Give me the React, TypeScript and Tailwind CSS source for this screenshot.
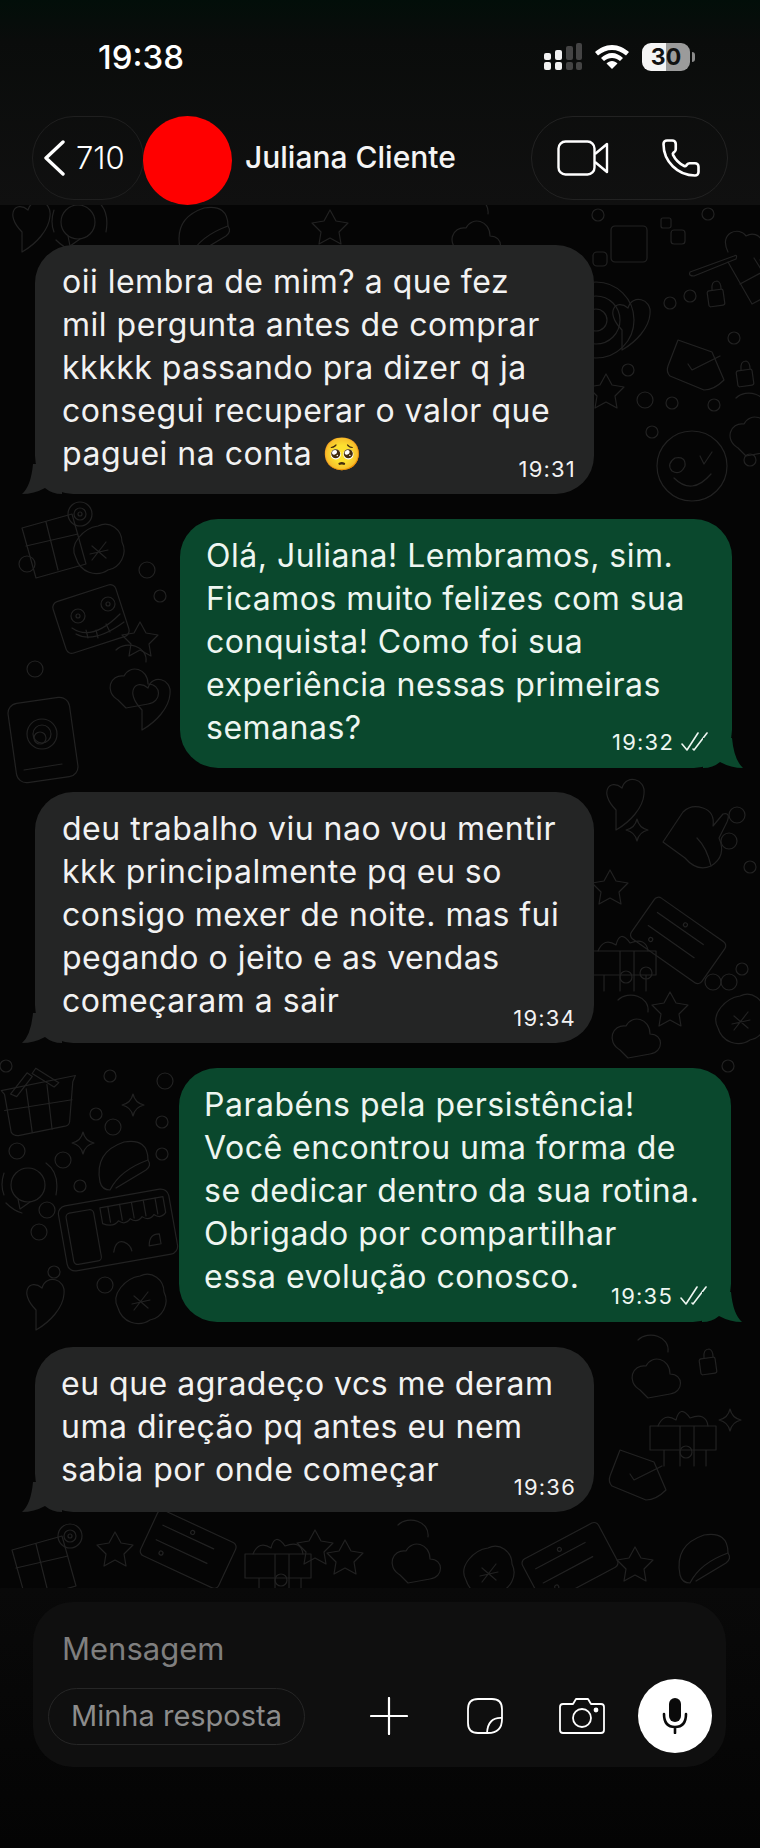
import { Phone } from "lucide-react";

const sans = "font-['Inter','Noto_Sans',sans-serif]";

const messages = [
  {
    out: false,
    time: "19:31",
    box: "ml-[35px] w-[559px] pt-[15px] pb-[19px] pl-[27px]",
    lines: ["oii lembra de mim? a que fez", "mil pergunta antes de comprar", "kkkkk passando pra dizer q ja", "consegui recuperar o valor que", "paguei na conta 🥺"],
  },
  {
    out: true,
    time: "19:32",
    box: "ml-[180px] w-[552px] pt-[15px] pb-[19px] pl-[26px]",
    lines: ["Olá, Juliana! Lembramos, sim.", "Ficamos muito felizes com sua", "conquista! Como foi sua", "experiência nessas primeiras", "semanas?"],
  },
  {
    out: false,
    time: "19:34",
    box: "mt-[-1px] ml-[35px] w-[559px] pt-[15px] pb-[21px] pl-[27px]",
    lines: ["deu trabalho viu nao vou mentir", "kkk principalmente pq eu so", "consigo mexer de noite. mas fui", "pegando o jeito e as vendas", "começaram a sair"],
  },
  {
    out: true,
    time: "19:35",
    box: "ml-[179px] w-[552px] pt-[15px] pb-[24px] pl-[25px]",
    lines: ["Parabéns pela persistência!", "Você encontrou uma forma de", "se dedicar dentro da sua rotina.", "Obrigado por compartilhar", "essa evolução conosco."],
  },
  {
    out: false,
    time: "19:36",
    box: "ml-[35px] w-[559px] pt-[15px] pb-[21px] pl-[26px]",
    lines: ["eu que agradeço vcs me deram", "uma direção pq antes eu nem", "sabia por onde começar"],
  },
];

// doodle wallpaper, drawn in page coordinates
function Wallpaper() {
  const dots = [
    [6, 1066], [110, 1076], [165, 1081], [96, 1114], [162, 1122], [113, 1127], [17, 1151], [63, 1160], [162, 1154], [80, 1186], [47, 1210], [39, 1232], [54, 1272], [105, 1285],
    [598, 215], [708, 214], [670, 303], [690, 296], [734, 338], [628, 370], [672, 403], [645, 400], [714, 405], [652, 432], [750, 460],
    [737, 815], [729, 841], [750, 867], [729, 982], [742, 969], [646, 973], [713, 982], [728, 1066],
    [27, 564], [147, 570], [160, 596], [35, 669], [40, 738],
  ];
  return (
    <svg
      aria-hidden="true"
      viewBox="0 205 760 1383"
      className="absolute inset-0 h-full w-full"
      fill="none"
      stroke="#222222"
      strokeWidth="1.2"
      strokeLinecap="round"
      strokeLinejoin="round"
    >
      <defs>
        <g id="basket">
          <path d="M0 20 L75 10 L72 16 L66 56 Q65 60 60 60 L14 66 Q9 66 7 62 L3 24 Z" />
          <path d="M2 40 L70 34 M25 20 L28 64 M46 17 L48 62" />
          <path d="M9 24 L27 4 L32 8 L15 27 Z M36 0 L58 16 L53 20 L32 5 Z" />
        </g>
        <path id="spark" d="M0 -11 Q2 -2 11 0 Q2 2 0 11 Q-2 2 -11 0 Q-2 -2 0 -11 Z" />
        <path id="star5" d="M0 -18 L6 -7 L18 -5 L9 4 L11 16 L0 10 L-11 16 L-9 4 L-18 -5 L-6 -7 Z" />
        <g id="taco">
          <path d="M0 40 Q-6 10 24 0 Q48 -4 48 18 Q20 28 10 48 Q2 48 0 40 Z" />
          <path d="M48 18 Q52 24 46 28 L16 46" />
        </g>
        <g id="shop">
          <rect x="0" y="0" width="112" height="66" rx="8" />
          <rect x="7" y="8" width="28" height="52" rx="4" />
          <path d="M42 8 H106 V24 Q100 30 94 24 Q88 30 82 24 Q76 30 70 24 Q64 30 58 24 Q52 30 42 24 Z" />
          <path d="M50 8 V24 M62 8 V24 M74 8 V24 M86 8 V24 M98 8 V24" />
          <path d="M48 54 Q52 42 60 46 Q66 50 66 56 M84 54 Q86 42 96 44 V54 Z" />
        </g>
        <g id="waves">
          <circle cx="0" cy="0" r="17" />
          <path d="M-10 14 L-8 24 L2 17" />
          <path d="M-24 10 Q-28 0 -24 -12 M18 -22 Q32 -12 28 10 M-22 18 Q-14 26 -6 28" />
        </g>
        <path id="heart" d="M0 10 C-18 -8 -6 -22 6 -12 C10 -26 30 -22 28 -6 C27 8 14 22 0 30 Z" />
        <g id="smiley">
          <circle cx="0" cy="0" r="35" />
          <path d="M-18 12 Q0 30 19 8" />
          <path d="M-17 -8 Q-26 -2 -20 5 Q-12 10 -7 0 Q-6 -10 -17 -8 M8 -10 L12 -2 L20 -14" />
        </g>
        <g id="lock">
          <rect x="0" y="8" width="16" height="16" rx="2" transform="rotate(-8 8 16)" />
          <path d="M4 8 Q3 -1 9 -1 Q13 0 13 7" />
        </g>
        <g id="cart">
          <path d="M0 10 L44 -6 Q48 -8 46 -3 L4 14 Q-2 14 0 10 Z" />
          <path d="M38 0 L62 42 L96 24 M50 22 L76 8 M64 -4 L84 28" />
          <path d="M38 -10 C28 -30 50 -36 56 -26 C70 -34 80 -14 70 -2" />
        </g>
        <g id="card">
          <path d="M10 0 L44 12 L56 40 Q46 50 36 50 L2 36 Q-2 32 0 26 Z" />
          <path d="M20 24 L24 30 L52 16" />
        </g>
        <g id="camera">
          <rect x="0" y="0" width="62" height="80" rx="10" transform="rotate(-8 31 40)" />
          <circle cx="30" cy="34" r="15" />
          <circle cx="30" cy="34" r="9" />
          <path d="M12 70 L50 64" />
        </g>
        <g id="grin">
          <rect x="0" y="0" width="66" height="54" rx="6" transform="rotate(-18 33 27)" />
          <circle cx="20" cy="24" r="7" />
          <circle cx="20" cy="24" r="2" />
          <circle cx="50" cy="12" r="7" />
          <circle cx="50" cy="12" r="2" />
          <path d="M14 36 Q34 50 62 22" />
          <path d="M18 42 Q36 52 66 30" />
          <path d="M28 38 L30 46 M38 38 L40 46 M48 32 L52 40" />
        </g>
        <g id="flower">
          <path d="M0 -24 C12 -30 24 -20 24 -8 C30 4 22 18 10 20 C-2 28 -18 22 -22 8 C-30 -6 -14 -22 0 -24 Z" />
          <path d="M-6 -4 L8 8 M8 -8 L-6 10 M-8 4 L10 0" />
        </g>
        <g id="mitten">
          <path d="M0 34 L20 4 Q28 -4 40 0 Q52 4 50 18 L60 6 Q68 4 64 14 L56 30 Q64 48 48 58 Q34 64 22 50 Z" />
          <path d="M34 30 Q44 40 48 58" />
        </g>
        <g id="tape">
          <rect x="0" y="0" width="86" height="50" rx="5" />
          <path d="M10 14 H66 M10 30 H66" />
          <circle cx="40" cy="8" r="2" />
          <circle cx="20" cy="40" r="2" />
        </g>
        <g id="gift">
          <path d="M0 16 H66 V40 M0 16 V40 M0 40 H66 M14 40 V56 M56 40 V56 M30 16 V56 M44 16 V56" />
          <path d="M8 16 Q14 2 26 10 Q30 -6 40 8 Q56 2 58 16" />
          <circle cx="36" cy="42" r="6" />
        </g>
        <g id="roll">
          <path d="M0 20 L50 6 L64 56 L14 70 Z M24 14 L36 62 M4 38 L56 26" />
          <circle cx="58" cy="6" r="12" />
          <circle cx="58" cy="6" r="6" />
          <circle cx="58" cy="6" r="2" />
        </g>
        <g id="squares">
          <rect x="0" y="0" width="36" height="36" rx="4" />
          <rect x="-18" y="26" width="14" height="14" rx="4" />
          <rect x="50" y="-8" width="10" height="10" rx="2" />
          <rect x="60" y="4" width="14" height="14" rx="3" />
        </g>
        <g id="cloud">
          <path d="M0 20 C-14 12 -8 -6 6 -4 C12 -16 30 -12 30 4 C44 4 44 22 30 24 L8 28 Z" />
          <path d="M-2 -30 C8 -40 30 -34 28 -18" />
        </g>
        <g id="spiral">
          <circle cx="0" cy="0" r="38" />
          <circle cx="0" cy="0" r="24" />
          <circle cx="0" cy="0" r="11" />
        </g>
      </defs>

      {dots.map(([x, y]) => (
        <circle key={`${x}-${y}`} cx={x} cy={y} r={x % 2 ? 8 : 6} />
      ))}

      {/* top strip */}
      <use href="#heart" x="22" y="222" />
      <use href="#waves" x="78" y="222" />
      <use href="#taco" x="180" y="208" />
      <use href="#star5" x="330" y="228" />
      <use href="#cloud" x="460" y="232" />
      <use href="#squares" x="611" y="226" />

      {/* right of the gray bubbles */}
      <use href="#cart" x="690" y="262" />
      <use href="#spiral" x="596" y="320" />
      <use href="#lock" x="708" y="282" />
      <use href="#lock" x="737" y="362" />
      <use href="#card" x="668" y="340" />
      <use href="#smiley" x="692" y="466" />
      <use href="#heart" x="622" y="320" />
      <use href="#cloud" x="738" y="428" />
      <use href="#star5" x="606" y="392" />
      <use href="#mitten" x="663" y="808" />
      <use href="#spark" x="637" y="830" />
      <use href="#star5" x="610" y="888" />
      <use href="#heart" x="616" y="800" />
      <use href="#tape" x="640" y="910" transform="rotate(35 672 930)" />
      <use href="#gift" x="590" y="935" />
      <use href="#flower" x="740" y="1020" />
      <use href="#star5" x="670" y="1010" />
      <use href="#cloud" x="620" y="1030" />

      {/* left of the green bubbles */}
      <use href="#roll" x="22" y="508" />
      <use href="#flower" x="98" y="550" />
      <use href="#grin" x="58" y="592" />
      <use href="#star5" x="140" y="640" />
      <use href="#camera" x="12" y="700" />
      <use href="#cloud" x="118" y="680" />
      <use href="#heart" x="142" y="700" />
      <use href="#basket" x="2" y="1068" transform="rotate(-4 40 1100)" />
      <use href="#spark" x="133" y="1105" />
      <use href="#spark" x="83" y="1143" />
      <use href="#taco" x="100" y="1142" />
      <use href="#waves" x="28" y="1185" />
      <use href="#shop" x="62" y="1197" transform="rotate(-10 118 1230)" />
      <use href="#heart" x="36" y="1300" />
      <use href="#flower" x="140" y="1300" />

      {/* right of the last bubble */}
      <use href="#cloud" x="640" y="1370" />
      <use href="#gift" x="650" y="1410" />
      <use href="#card" x="610" y="1450" />
      <use href="#spark" x="730" y="1420" />
      <use href="#lock" x="700" y="1350" />

      {/* bottom strip */}
      <use href="#roll" x="12" y="1530" />
      <use href="#star5" x="115" y="1550" />
      <use href="#tape" x="145" y="1525" transform="rotate(25 190 1550)" />
      <use href="#gift" x="245" y="1538" />
      <use href="#star5" x="315" y="1548" />
      <use href="#star5" x="345" y="1558" />
      <use href="#cloud" x="400" y="1555" />
      <use href="#flower" x="488" y="1572" />
      <use href="#tape" x="525" y="1540" transform="rotate(-28 565 1560)" />
      <use href="#star5" x="635" y="1565" />
      <use href="#taco" x="680" y="1535" />
    </svg>
  );
}

function Ticks() {
  return (
    <svg viewBox="0 0 27 20" className="h-[20px] w-[27px]" fill="none" stroke="currentColor" strokeWidth="1.6" strokeLinecap="round" strokeLinejoin="round">
      <path d="M1 12 L6 18 L17 1" />
      <path d="M12 17 L13 18 L26 1" />
    </svg>
  );
}

function Bubble({ out, time, lines, box }: { out: boolean; time: string; lines: string[]; box: string }) {
  return (
    <div className={`relative rounded-[38px] ${box} ${out ? "bg-[#0a482d] text-[#eef6f1]" : "bg-[#242525] text-[#f2f2f2]"}`}>
      {lines.map((line) => (
        <div key={line} className="h-[43px] whitespace-nowrap text-[32px] leading-[43px] tracking-[0.5px]">
          {line}
        </div>
      ))}
      <div className={out ? "absolute right-[24px] bottom-[13px] flex items-center gap-[7px] text-[22px] leading-[26px] tracking-[1.2px]" : "absolute right-[18px] bottom-[12px] text-[22px] leading-[26px] tracking-[1.2px]"}>
        {time}
        {out ? <Ticks /> : null}
      </div>
      {out ? (
        <svg viewBox="0 0 40 30" className="absolute right-[-11px] bottom-0 h-[30px] w-[40px]" fill="#0a482d">
          <path d="M0 30 Q10 30 17 24 Q28 30 40 30 Q31 22 29 0 L0 0 Z" />
        </svg>
      ) : (
        <svg viewBox="0 0 40 30" className="absolute bottom-0 left-[-13px] h-[30px] w-[40px]" fill="#242525">
          <path d="M40 30 Q30 30 23 24 Q12 30 0 30 Q9 22 11 0 L40 0 Z" />
        </svg>
      )}
    </div>
  );
}

function StatusIcons() {
  return (
    <div className="mt-[1px] flex items-center">
      <svg viewBox="0 0 40 30" className="h-[30px] w-[40px]">
        <rect x="1" y="20" width="7" height="8" rx="2" fill="#f2f2f2" />
        <rect x="1" y="11" width="7" height="7" rx="2" fill="#f2f2f2" />
        <rect x="12" y="20" width="7" height="8" rx="2" fill="#f2f2f2" />
        <rect x="12" y="8" width="7" height="10" rx="2" fill="#f2f2f2" />
        <rect x="23" y="20" width="7" height="8" rx="2" fill="#444" />
        <rect x="23" y="4" width="7" height="14" rx="2" fill="#444" />
        <rect x="33" y="20" width="6" height="8" rx="2" fill="#444" />
        <rect x="33" y="1" width="6" height="17" rx="2" fill="#444" />
      </svg>
      <svg viewBox="0 0 34 24" className="ml-[12px] h-[24px] w-[34px]" fill="#fff">
        <path d="M17 0 C24 0 29 3 34 7 L31 10.500 C27 7 22 5 17 5 C12 5 7 7 3 10.500 L0 7 C5 3 10 0 17 0 Z" />
        <path d="M17 8 C21 8 25 10 28 13 L25 16 C22.500 14 20 13 17 13 C14 13 11.500 14 9 16 L6 13 C9 10 13 8 17 8 Z" />
        <path d="M17 16 C19 16 21 17 22.500 18.500 L17 24 L11.500 18.500 C13 17 15 16 17 16 Z" />
      </svg>
      <div className="ml-[13px] flex h-[28px] w-[48px] items-center justify-center rounded-[9px] bg-[linear-gradient(90deg,#f4f4f4_50%,#9b9b9b_50%)] text-[23px] font-bold text-[#111]">
        30
      </div>
      <div className="ml-[2px] h-[10px] w-[3px] rounded-r-full bg-[#8a8a8a]" />
    </div>
  );
}

function Header() {
  return (
    <header className="h-[205px] bg-[linear-gradient(180deg,#020e09_0%,#0a0c0b_20%,#101010_100%)]">
      <div className="flex h-[116px] items-start justify-between pt-[41px] pr-[65px] pl-[98px]">
        <div className="text-[33px] leading-[32px] font-medium text-white">19:38</div>
        <StatusIcons />
      </div>
      <div className="flex items-start pr-[32px] pl-[32px]">
        <div className="flex h-[84px] w-[112px] items-center rounded-full border border-[#1f1f1f] pl-[10px] text-white">
          <svg viewBox="0 0 22 36" className="h-[36px] w-[22px]" fill="none" stroke="currentColor" strokeWidth="3.4" strokeLinecap="round" strokeLinejoin="round">
            <path d="M20 2 L3 18 L20 34" />
          </svg>
          <span className="ml-[11px] text-[31px] font-light">710</span>
        </div>
        <div className="ml-[-1px] size-[89px] shrink-0 rounded-full bg-[#ff0000]" />
        <div className="ml-[13px] h-[84px] text-[30px] leading-[82px] font-medium text-[#f5f5f5]">Juliana Cliente</div>
        <div className="ml-auto flex h-[84px] w-[197px] items-center rounded-full border border-[#222] pl-[25px] text-white">
          <svg viewBox="0 0 52 36" className="h-[36px] w-[52px]" fill="none" stroke="currentColor" strokeWidth="2.4" strokeLinejoin="round">
            <rect x="1.500" y="1.500" width="36" height="33" rx="7" />
            <path d="M38 14 L50 4 V32 L38 22" />
          </svg>
          <Phone className="ml-[51px] size-[42px]" strokeWidth={1.5} />
        </div>
      </div>
    </header>
  );
}

function Composer() {
  return (
    <footer className="h-[260px] bg-[linear-gradient(180deg,#090909_0%,#040404_100%)] pt-[14px] pr-[34px] pl-[33px]">
      <div className="h-[165px] rounded-[40px] bg-[#0f0f0f] pt-[29px] pl-[15px]">
        <div className="pl-[14px] text-[31px] leading-[36px] text-[#7f7f7f]">Mensagem</div>
        <div className="mt-[12px] flex h-[74px] items-center">
          <div className="flex h-[57px] w-[257px] items-center justify-center rounded-full border border-[#262626] text-[29px] text-[#8c8c8c]">Minha resposta</div>
          <svg viewBox="0 0 38 38" className="ml-[65px] size-[38px]" stroke="#fff" strokeWidth="2.2" strokeLinecap="round">
            <path d="M19 1 V37 M1 19 H37" />
          </svg>
          <svg viewBox="0 0 36 36" className="ml-[59px] size-[36px]" fill="none" stroke="#fff" strokeWidth="1.8" strokeLinejoin="round">
            <path d="M11 1 H25 Q35 1 35 11 V21 Q35 35 21 35 H11 Q1 35 1 25 V11 Q1 1 11 1 Z" />
            <path d="M35 20 Q21 19 20 35" />
          </svg>
          <svg viewBox="0 0 46 36" className="ml-[56px] h-[36px] w-[46px]" fill="none" stroke="#fff" strokeWidth="1.8" strokeLinejoin="round">
            <path d="M4 6 H14 L17 1 H29 L32 6 H42 Q45 6 45 9 V32 Q45 35 42 35 H4 Q1 35 1 32 V9 Q1 6 4 6 Z" />
            <circle cx="23" cy="20" r="9" />
            <circle cx="37" cy="12" r="1.500" fill="#fff" />
          </svg>
          <div className="ml-[33px] flex size-[74px] items-center justify-center rounded-full bg-white">
            <svg viewBox="0 0 26 36" className="h-[36px] w-[26px]" fill="none" stroke="#0a0a0a" strokeWidth="2.6" strokeLinecap="round">
              <rect x="7" y="0" width="12" height="24" rx="6" fill="#0a0a0a" stroke="none" />
              <path d="M2 16 Q2 29 13 29 Q24 29 24 16 M13 29 V35" />
            </svg>
          </div>
        </div>
      </div>
    </footer>
  );
}

export default function App() {
  return (
    <div className={`flex h-[1848px] w-[760px] flex-col overflow-hidden bg-[#050505] ${sans}`}>
      <Header />
      <main className="relative h-[1383px] overflow-hidden bg-[#050505] pt-[40px]">
        <Wallpaper />
        <div className="relative flex flex-col gap-[25px]">
          {messages.map((m) => (
            <Bubble key={m.time} out={m.out} time={m.time} lines={m.lines} box={m.box} />
          ))}
        </div>
      </main>
      <Composer />
    </div>
  );
}
